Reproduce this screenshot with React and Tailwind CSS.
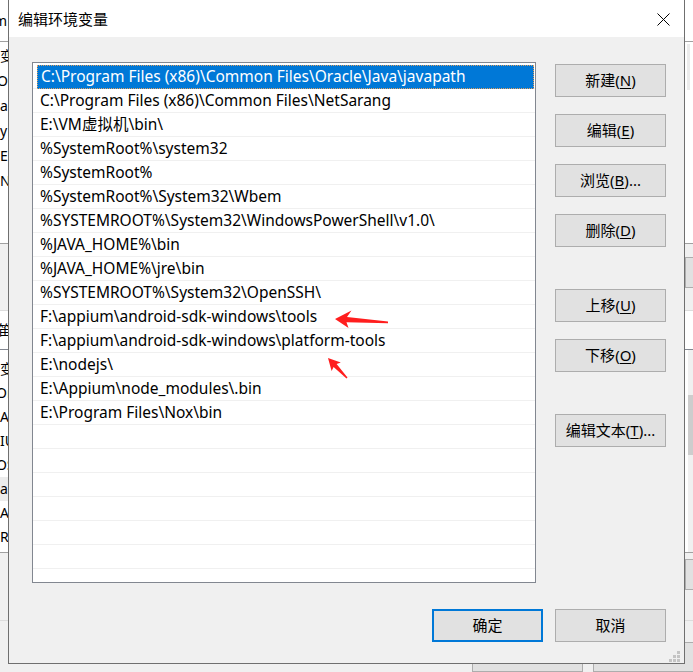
import React from "react";

const F = "font-['Noto_Sans','Noto_Sans_CJK_SC',sans-serif]";

const paths = [
  "C:\\Program Files (x86)\\Common Files\\Oracle\\Java\\javapath",
  "C:\\Program Files (x86)\\Common Files\\NetSarang",
  "E:\\VM虚拟机\\bin\\",
  "%SystemRoot%\\system32",
  "%SystemRoot%",
  "%SystemRoot%\\System32\\Wbem",
  "%SYSTEMROOT%\\System32\\WindowsPowerShell\\v1.0\\",
  "%JAVA_HOME%\\bin",
  "%JAVA_HOME%\\jre\\bin",
  "%SYSTEMROOT%\\System32\\OpenSSH\\",
  "F:\\appium\\android-sdk-windows\\tools",
  "F:\\appium\\android-sdk-windows\\platform-tools",
  "E:\\nodejs\\",
  "E:\\Appium\\node_modules\\.bin",
  "E:\\Program Files\\Nox\\bin",
];
const rows = [...paths, ...Array(8).fill("")];

const sideButtons = [
  { t: "新建", k: "N", mt: "mt-[2px]" },
  { t: "编辑", k: "E", mt: "mt-[17px]" },
  { t: "浏览", k: "B", dots: true, mt: "mt-[17px]" },
  { t: "删除", k: "D", mt: "mt-[17px]" },
  { t: "上移", k: "U", mt: "mt-[42px]" },
  { t: "下移", k: "O", mt: "mt-[17px]" },
  { t: "编辑文本", k: "T", dots: true, mt: "mt-[42px]" },
];

function WinButton({ children, className = "" }) {
  return (
    <div
      className={`w-[111px] h-[33px] flex items-center justify-center border border-[#adadad] bg-[#e1e1e1] text-[15px] text-black ${className}`}
    >
      {children}
    </div>
  );
}

function Background() {
  const topRows = ["变量", "Or", "a", "y", "E", "N"];
  const listRows = ["变量", "Or", "A", "IU", "OS", "a", "A", "R", "D"];
  return (
    <div className={`flex flex-col w-[693px] h-[672px] text-[14px] text-black ${F}`}>
      <div className="h-[44px] bg-white border-b border-[#a0a0a0] flex items-center">
        <span className="-ml-[6px]">m</span>
      </div>
      <div className="h-[208px] bg-white flex">
        <div className="flex-1 flex flex-col pt-[1px]">
          {topRows.map((r, i) => (
            <div key={i} className="h-[25px] flex items-center">
              <span className={i === 1 ? "-ml-[3px]" : ""}>{r}</span>
            </div>
          ))}
        </div>
        <div className="w-[8px] pt-[2px]">
          <div className="ml-[2px] w-[3px] h-[46px] bg-[#ececec]" />
        </div>
      </div>
      <div className="h-[70px] bg-[#f0f0f0] border-t border-[#a0a0a0] flex">
        <div className="flex-1" />
        <div className="w-[8px] pt-[13px]">
          <div className="w-[20px] h-[31px] border border-[#adadad] bg-[#e1e1e1]" />
        </div>
      </div>
      <div className="h-[40px] bg-white border-t border-[#dcdcdc] flex items-center">
        <span className="-ml-[2px]">笛</span>
      </div>
      <div className="h-[211px] bg-white border-t border-[#828790] flex overflow-hidden">
        <div className="flex-1 flex flex-col pt-[7px]">
          {listRows.map((r, i) => (
            <div
              key={i}
              className={`h-[24px] shrink-0 flex items-center ${i === 5 ? "bg-[#ececec]" : ""}`}
            >
              <span className={i === 1 || i === 4 ? "-ml-[4px]" : ""}>{r}</span>
            </div>
          ))}
        </div>
        <div className="w-[8px] pl-[3px] bg-white">
          <div className="w-[5px] h-full bg-[#f0f0f0] pt-[45px]">
            <div className="w-[5px] h-[60px] bg-[#cdcdcd]" />
          </div>
        </div>
      </div>
      <div className="h-[72px] bg-[#f0f0f0] border-t border-[#a0a0a0] border-b border-b-[#dcdcdc] flex">
        <div className="flex-1" />
        <div className="w-[8px] pt-[6px]">
          <div className="w-[20px] h-[31px] border border-[#adadad] bg-[#e1e1e1]" />
        </div>
      </div>
      <div className="flex-1 bg-[#f0f0f0] flex pt-[21px] pl-[472px] gap-[10px]">
        <div className="w-[111px] h-[30px] border border-[#adadad] bg-[#e1e1e1] shrink-0" />
        <div className="w-[111px] h-[30px] border border-[#adadad] bg-[#e1e1e1] shrink-0" />
      </div>
    </div>
  );
}

function Arrows() {
  return (
    <svg
      className="absolute left-0 top-0 pointer-events-none"
      width="693"
      height="672"
      viewBox="0 0 693 672"
    >
      <polygon
        fill="#ff1e1e"
        points="335,319 351.5,310.5 347,317 388,321.6 388,323.2 346.5,322.3 348.5,328"
      />
      <polygon
        fill="#ff1e1e"
        points="328,358 340.8,362.4 336.6,364 347.5,377.6 346.5,378.6 333.6,366.9 331.6,371"
      />
    </svg>
  );
}

export default function App() {
  return (
    <div className="relative w-[693px] h-[672px] overflow-hidden bg-[#f0f0f0]">
      <Background />
      <div
        className={`absolute left-[8px] top-[-1px] w-[677px] h-[665px] border border-[#6f6f6f] bg-[#f0f0f0] flex flex-col text-black ${F}`}
      >
        <div className="h-[37px] bg-white flex items-center justify-between pl-[9px] pr-[14px] shrink-0">
          <span className="text-[15px] mt-[2px]">编辑环境变量</span>
          <svg width="13" height="13" viewBox="0 0 13 13" className="mt-[1px]">
            <path d="M0.5 0.5 L12.5 12.5 M12.5 0.5 L0.5 12.5" stroke="#000" strokeWidth="1" />
          </svg>
        </div>
        <div className="flex pt-[25px] pl-[23px]">
          <div className="w-[504px] h-[521px] border border-[#828790] bg-white overflow-hidden pt-[2px] shrink-0">
            {rows.map((p, i) => (
              <div
                key={i}
                className="h-[24px] border-b border-[#f0f0f0] flex text-[15.5px] leading-none whitespace-nowrap"
              >
                {i === 0 ? (
                  <div className="ml-[4px] mr-[1px] flex-1 bg-[#0078d7] text-white flex items-center pl-[3px] border border-dotted border-[#e0a060] -mb-[1px]">
                    {p}
                  </div>
                ) : (
                  <div className="flex items-center pl-[7px]">{p}</div>
                )}
              </div>
            ))}
          </div>
          <div className="ml-[19px] flex flex-col">
            {sideButtons.map((b, i) => (
              <WinButton key={i} className={b.mt}>
                <span>
                  {b.t}(<span className="underline underline-offset-2">{b.k}</span>){b.dots ? "..." : ""}
                </span>
              </WinButton>
            ))}
          </div>
        </div>
        <div className="flex justify-end gap-[12px] pr-[18px] mt-[26px]">
          <div className="w-[111px] h-[33px] flex items-center justify-center border-2 border-[#0078d7] bg-[#e1e1e1] text-[15px]">
            确定
          </div>
          <WinButton>取消</WinButton>
        </div>
        <svg
          className="absolute right-[3px] bottom-[1px]"
          width="12"
          height="11"
          viewBox="0 0 12 11"
        >
          <rect x="8" y="0" width="3" height="3" fill="#c4c4c4" />
          <rect x="4" y="4" width="3" height="3" fill="#c4c4c4" />
          <rect x="8" y="4" width="3" height="3" fill="#c4c4c4" />
          <rect x="0" y="8" width="3" height="3" fill="#c4c4c4" />
          <rect x="4" y="8" width="3" height="3" fill="#c4c4c4" />
          <rect x="8" y="8" width="3" height="3" fill="#c4c4c4" />
        </svg>
      </div>
      <Arrows />
    </div>
  );
}
